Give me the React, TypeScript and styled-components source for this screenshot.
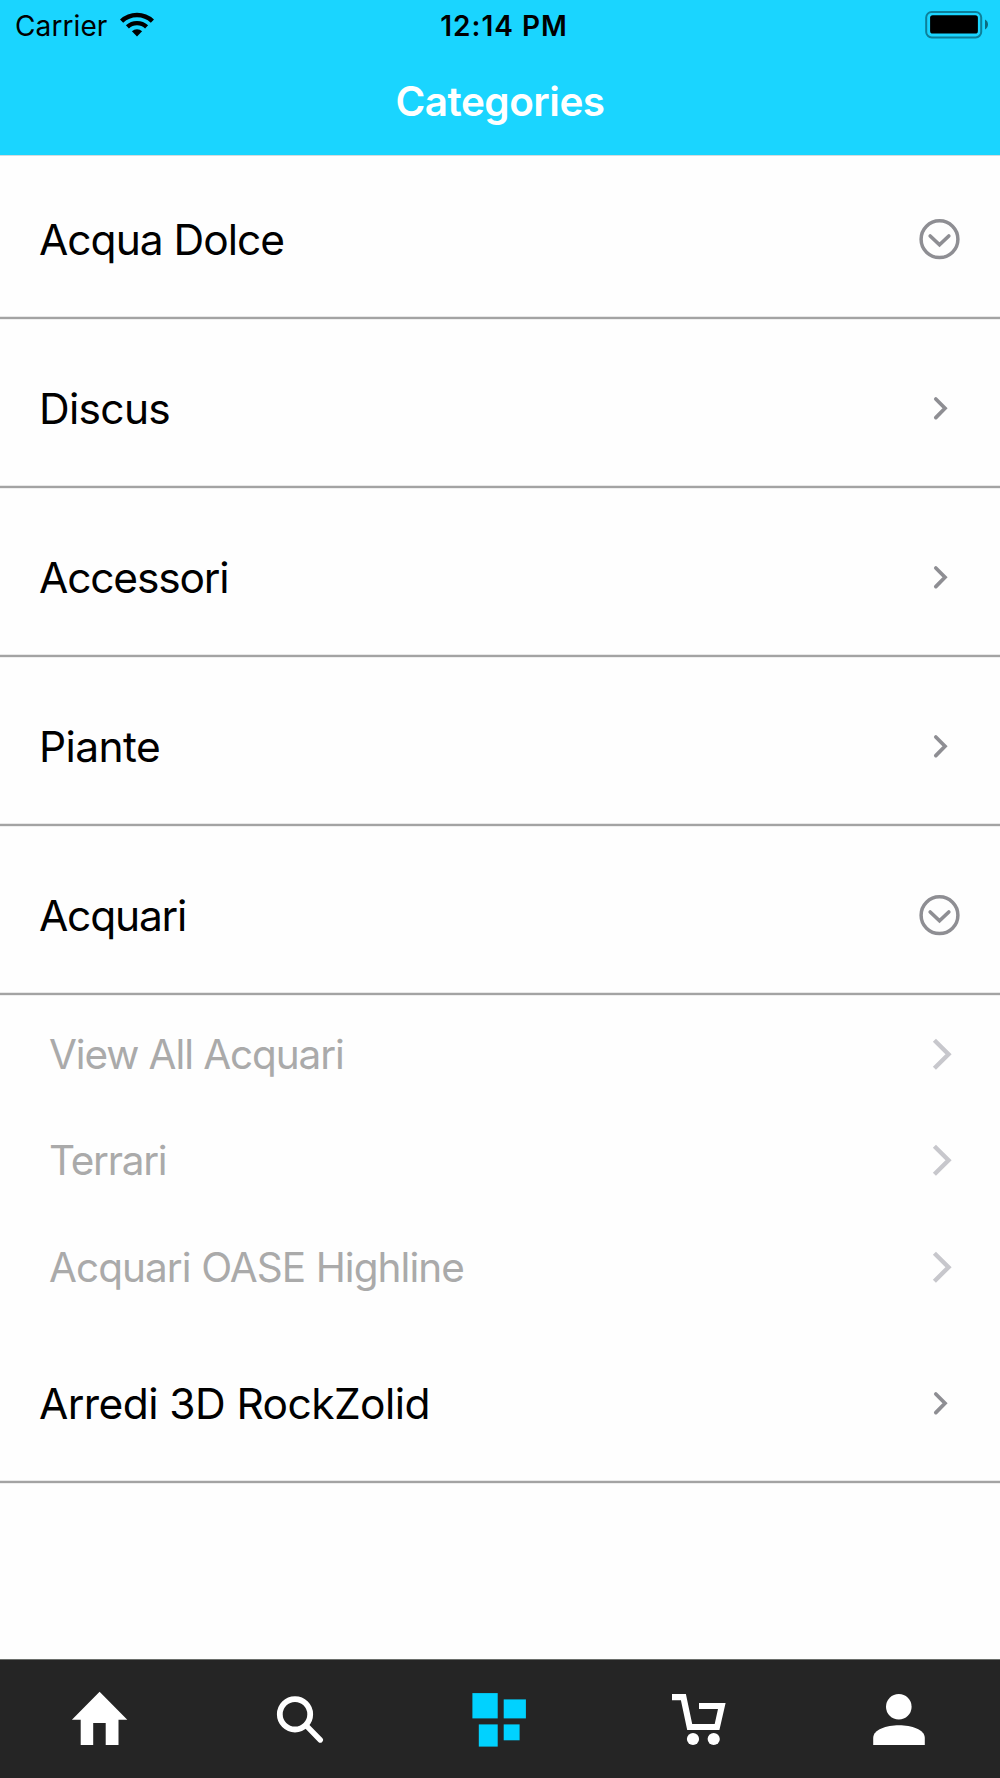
import React from 'react';
import styled, { createGlobalStyle } from 'styled-components';

const GlobalStyle = createGlobalStyle`
  *, *::before, *::after { box-sizing: border-box; }
  body { margin: 0; background: #fefefe; font-family: Inter, "Liberation Sans", sans-serif; }
  svg { display: block; flex: none; }
`;

const Screen = styled.div`
  width: 1000px;
  height: 1778px;
  display: flex;
  flex-direction: column;
  background: #fefefe;
  color: #000;
  overflow: hidden;
`;

const Header = styled.header`
  flex: none;
  height: 156px;
  background: #1ad5ff;
  border-bottom: 1px solid #d3dcdf;
`;

const StatusBar = styled.div`
  height: 50px;
  display: grid;
  grid-template-columns: 1fr auto 1fr;
  align-items: center;
  padding: 0 11px 0 15px;
`;

const Carrier = styled.div`
  display: flex;
  align-items: center;
  gap: 13px;

  svg { margin-bottom: 2px; }
`;

const CarrierName = styled.span`
  padding-top: 1px;
  font-size: 28px;
  line-height: 40px;
  letter-spacing: 0.1px;
`;

const Clock = styled.div`
  padding: 1px 0 0 4px;
  font-size: 28px;
  font-weight: 600;
  line-height: 40px;
  letter-spacing: 1px;
`;

const BatterySlot = styled.div`
  display: flex;
  justify-content: flex-end;
`;

const Title = styled.h1`
  margin: 0;
  padding-top: 27px;
  text-align: center;
  font-size: 40.5px;
  font-weight: 600;
  line-height: 50px;
  letter-spacing: -0.5px;
  color: #fff;
`;

const List = styled.main`
  flex: 1;
`;

const Row = styled.div<{ $height?: number }>`
  height: ${(p) => p.$height ?? 169}px;
  display: flex;
  justify-content: space-between;
  align-items: flex-end;
  padding: 0 39px 48px;
  border-bottom: 2px solid #a3a3a3;
  box-shadow: inset 0 -1px 0 #e8e8e8, 0 1px 0 #efefef;
`;

const RowLabel = styled.span<{ $spacing: number }>`
  margin-bottom: -1px;
  font-size: 42.5px;
  line-height: 60px;
  letter-spacing: ${(p) => p.$spacing}px;
`;

const IconSlot = styled.span`
  width: 42px;
  height: 60px;
  display: flex;
  align-items: center;
  justify-content: center;
`;

const SubList = styled.div`
  padding: 6px 0 0;
  height: 319px;
`;

const SubRow = styled.div`
  height: 106.33px;
  display: flex;
  align-items: center;
  justify-content: space-between;
  padding: 0 37px 0 49px;
  color: #aaa;
`;

const SubLabel = styled.span<{ $spacing: number }>`
  padding-top: 2px;
  font-size: 40.5px;
  line-height: 56px;
  letter-spacing: ${(p) => p.$spacing}px;
`;

const TabBar = styled.nav`
  flex: none;
  height: 119px;
  display: grid;
  grid-template-columns: repeat(5, 1fr);
  justify-items: center;
  padding-top: 28px;
  background: #252525;
  border-top: 1px solid #6c6f6c;
`;

const Tab = styled.a<{ $active?: boolean }>`
  width: 60px;
  height: 60px;
  color: ${(p) => (p.$active ? '#00d2ff' : '#fff')};
`;

const Wifi = () => (
  <svg width="34" height="25" viewBox="0 0 34 25" fill="none" stroke="#000">
    <path d="M1.6 9.1 A22.4 22.4 0 0 1 32.4 9.1" strokeWidth="4.6" />
    <path d="M7.4 14.9 A14 14 0 0 1 26.6 14.9" strokeWidth="4.4" />
    <path d="M11.9 19.3 A7.3 7.3 0 0 1 22.1 19.3 L17 24.4 Z" fill="#000" stroke="none" />
  </svg>
);

const Battery = () => (
  <svg width="64" height="28" viewBox="0 0 64 28">
    <rect x="1.2" y="1" width="55" height="25.4" rx="5.5" fill="none" stroke="#0d7f99" strokeWidth="2" />
    <rect x="5.1" y="4.2" width="47.8" height="18.4" rx="2.6" fill="#000" />
    <path d="M60 8.6 C64 10.5 64 16.5 60 18.4 Z" fill="#0d6b80" />
  </svg>
);

const ExpandIcon = () => (
  <svg width="42" height="42" viewBox="0 0 42 42" fill="none" stroke="#8e8e93" strokeLinecap="round">
    <circle cx="20.5" cy="21.2" r="18.4" strokeWidth="3.5" />
    <path d="M11.2 18 L20.5 26.8 L29.8 18" strokeWidth="3.7" />
  </svg>
);

const ChevronIcon = () => (
  <svg width="42" height="42" viewBox="0 0 42 42" fill="none" stroke="#8e8e93" strokeLinecap="round">
    <path d="M16.8 12 L26 21.3 L16.8 30.6" strokeWidth="3.7" />
  </svg>
);

const SubChevron = () => (
  <svg width="42" height="42" viewBox="0 0 42 42" fill="none" stroke="#c7c7cc">
    <path d="M13.4 7.2 L27.5 21.2 L13.4 35.2" strokeWidth="4.4" />
  </svg>
);

const HomeIcon = () => (
  <svg width="60" height="60" viewBox="0 0 60 60" fill="currentColor">
    <path d="M29.6 3.7 L57.3 31.8 H48.5 V57 H35.7 V35 H23.2 V57 H10.7 V31.8 H1.9 Z" />
  </svg>
);

const SearchIcon = () => (
  <svg width="60" height="60" viewBox="0 0 60 60" fill="none" stroke="currentColor">
    <circle cx="25" cy="26.3" r="15.2" strokeWidth="5.8" />
    <path d="M36.3 37.6 L50.3 52" strokeWidth="5.4" strokeLinecap="round" />
  </svg>
);

const GridIcon = () => (
  <svg width="60" height="60" viewBox="0 0 60 60" fill="currentColor">
    <rect x="2.4" y="5.1" width="25.3" height="25.3" />
    <rect x="33.7" y="11.4" width="22.2" height="19" />
    <rect x="8.8" y="36.4" width="18.9" height="22.2" />
    <rect x="33.7" y="36.4" width="15.9" height="15.9" />
  </svg>
);

const CartIcon = () => (
  <svg width="60" height="60" viewBox="0 0 60 60" fill="currentColor">
    <path d="M2 6 H15.9 L22.2 36 H44.7 L48 21 H29 V15 H55.6 L49.4 42 H17.2 L10.9 12.2 H2 Z" />
    <circle cx="23" cy="51" r="6.1" />
    <circle cx="43.7" cy="51" r="6.1" />
  </svg>
);

const PersonIcon = () => (
  <svg width="60" height="60" viewBox="0 0 60 60" fill="currentColor">
    <circle cx="28.8" cy="18.8" r="12.8" />
    <path d="M3.2 57 V50 C3.2 41.5 16.5 37.3 29 37.3 C41.5 37.3 54.8 41.5 54.8 50 V57 Z" />
  </svg>
);

interface Category {
  name: string;
  spacing: number;
  height?: number;
  expandable?: boolean;
  children?: { name: string; spacing: number }[];
}

const categories: Category[] = [
  { name: 'Acqua Dolce', spacing: -1.0, height: 163, expandable: true },
  { name: 'Discus', spacing: -0.7 },
  { name: 'Accessori', spacing: -1.18 },
  { name: 'Piante', spacing: -0.6 },
  {
    name: 'Acquari',
    spacing: -1.2,
    expandable: true,
    children: [
      { name: 'View All Acquari', spacing: -1.11 },
      { name: 'Terrari', spacing: -1.25 },
      { name: 'Acquari OASE Highline', spacing: -0.94 },
    ],
  },
  { name: 'Arredi 3D RockZolid', spacing: -0.58 },
];

const tabs = [
  { id: 'home', Icon: HomeIcon },
  { id: 'search', Icon: SearchIcon },
  { id: 'categories', Icon: GridIcon },
  { id: 'cart', Icon: CartIcon },
  { id: 'account', Icon: PersonIcon },
];

export default function App() {
  return (
    <Screen>
      <GlobalStyle />
      <Header>
        <StatusBar>
          <Carrier>
            <CarrierName>Carrier</CarrierName>
            <Wifi />
          </Carrier>
          <Clock>12:14 PM</Clock>
          <BatterySlot>
            <Battery />
          </BatterySlot>
        </StatusBar>
        <Title>Categories</Title>
      </Header>
      <List>
        {categories.map((c) => (
          <React.Fragment key={c.name}>
            <Row $height={c.height}>
              <RowLabel $spacing={c.spacing}>{c.name}</RowLabel>
              <IconSlot>{c.expandable ? <ExpandIcon /> : <ChevronIcon />}</IconSlot>
            </Row>
            {c.children && (
              <SubList>
                {c.children.map((s) => (
                  <SubRow key={s.name}>
                    <SubLabel $spacing={s.spacing}>{s.name}</SubLabel>
                    <SubChevron />
                  </SubRow>
                ))}
              </SubList>
            )}
          </React.Fragment>
        ))}
      </List>
      <TabBar>
        {tabs.map(({ id, Icon }) => (
          <Tab key={id} $active={id === 'categories'}>
            <Icon />
          </Tab>
        ))}
      </TabBar>
    </Screen>
  );
}
